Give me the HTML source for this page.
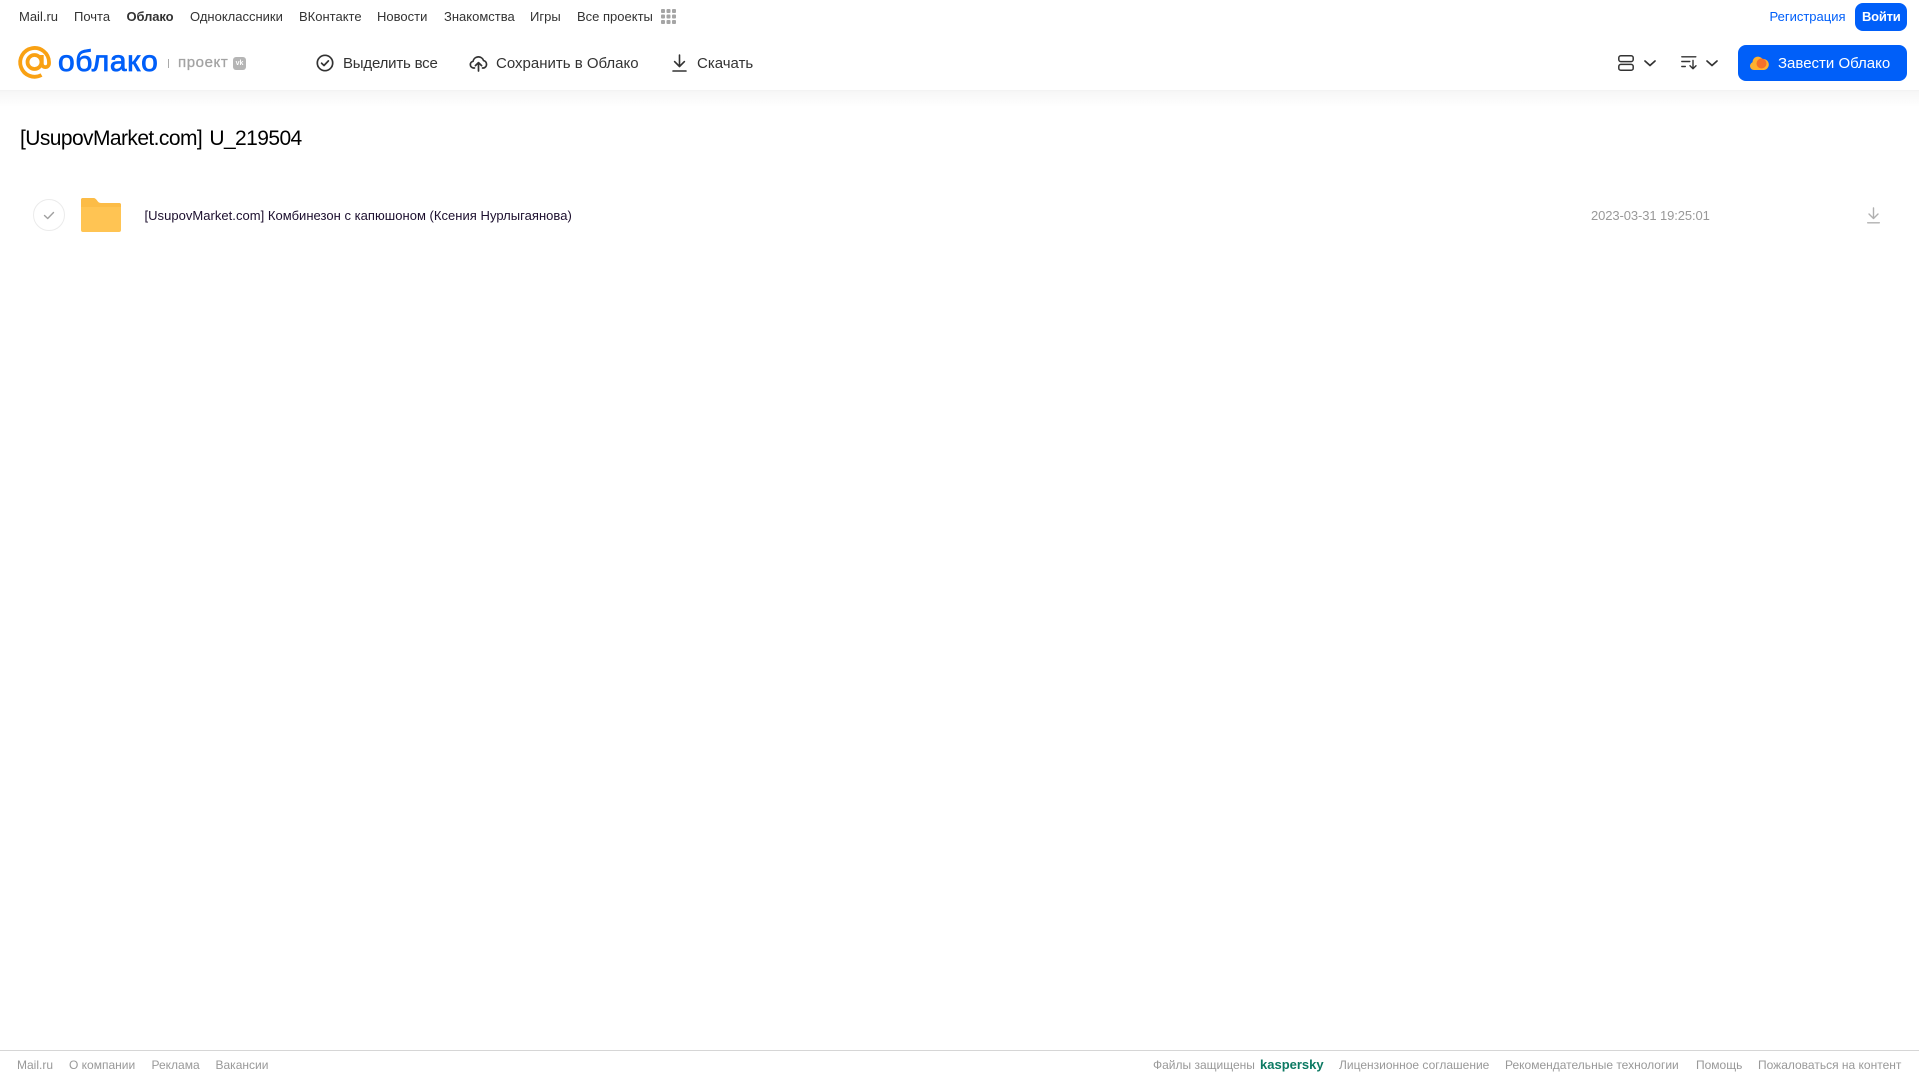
<!DOCTYPE html>
<html lang="ru">
<head>
<meta charset="utf-8">
<title>Облако</title>
<style>
html,body{margin:0;padding:0;background:#fff;width:1919px;height:1079px;overflow:hidden}
body{position:relative;font-family:"Liberation Sans",Arial,sans-serif}
.t{position:absolute;white-space:nowrap;line-height:1}
.n{top:10px;font-size:13px;color:#333;transform-origin:0 50%}
.b{top:56px;font-size:15px;color:#333}
.f{top:1059px;font-size:12px;color:#999}
svg{position:absolute;overflow:visible}
#shadow{position:absolute;left:0;top:91px;width:1919px;height:16px;background:linear-gradient(#f6f6f6,#fff);}
#hdrline{position:absolute;left:0;top:90px;width:1919px;height:1px;background:#f3f3f3}
#foot{position:absolute;left:0;top:1050px;width:1919px;height:1px;background:#d6d6d6}
.btn{position:absolute;background:#005ff9}
</style>
</head>
<body>
<div id="shadow"></div><div id="hdrline"></div>

<span class="t n" style="left:19px">Mail.ru</span>
<span class="t n" style="left:74px">Почта</span>
<span class="t n" style="left:126.500px;font-weight:bold;letter-spacing:-.1px">Облако</span>
<span class="t n" style="left:190px">Одноклассники</span>
<span class="t n" style="left:299px">ВКонтакте</span>
<span class="t n" style="left:377px">Новости</span>
<span class="t n" style="left:444px">Знакомства</span>
<span class="t n" style="left:530px">Игры</span>
<span class="t n" style="left:577px">Все проекты</span>
<svg style="left:661px;top:9px" width="15" height="15" fill="#a5a5a5">
<rect x="0" y="0" width="4" height="4" rx="1"/><rect x="5.500" y="0" width="4" height="4" rx="1"/><rect x="11" y="0" width="4" height="4" rx="1"/>
<rect x="0" y="5.500" width="4" height="4" rx="1"/><rect x="5.500" y="5.500" width="4" height="4" rx="1"/><rect x="11" y="5.500" width="4" height="4" rx="1"/>
<rect x="0" y="11" width="4" height="4" rx="1"/><rect x="5.500" y="11" width="4" height="4" rx="1"/><rect x="11" y="11" width="4" height="4" rx="1"/>
</svg>

<span class="t n" style="left:1769.500px;color:#005ff9">Регистрация</span>
<div class="btn" style="left:1855px;top:3px;width:52px;height:28px;border-radius:8px"></div>
<span class="t n" style="left:1862px;color:#fff;font-weight:bold;font-size:13px;letter-spacing:-.25px">Войти</span>

<!-- logo -->
<svg style="left:-1px;top:39px" width="60" height="45" fill="none" stroke="#f9a113" stroke-width="3.800">
<circle cx="35.500" cy="23" r="7"/>
<path d="M42.500 36A14.400 14.400 0 1 1 50 23v1.500a3.600 3.600 0 0 1-7.200 0V16"/>
</svg>
<span class="t" style="left:58px;top:47px;font-size:30px;color:#005ff9;letter-spacing:.6px;-webkit-text-stroke:.8px #005ff9">облако</span>
<div style="position:absolute;left:168px;top:59px;width:1px;height:9px;background:#aaa"></div>
<span class="t" style="left:178px;top:55px;font-size:15px;color:#a3a3a3;letter-spacing:.6px;-webkit-text-stroke:.3px #a3a3a3">проект</span>
<div style="position:absolute;left:233px;top:57px;width:13px;height:13px;border-radius:3px;background:#b5b5b5;color:#fff;font-size:7px;font-weight:bold;text-align:center;line-height:13px">vk</div>

<!-- toolbar -->
<svg style="left:316px;top:54px" width="18" height="18" fill="none" stroke="#333" stroke-width="1.700">
<circle cx="9" cy="9" r="7.700"/><path d="M5.600 9.200l2.400 2.300 4.400-4.600" stroke-linecap="round" stroke-linejoin="round"/>
</svg>
<span class="t b" style="left:343px;letter-spacing:-.2px">Выделить все</span>
<svg style="left:469px;top:54px" width="19" height="18" fill="none" stroke="#333" stroke-width="1.700" stroke-linecap="round" stroke-linejoin="round">
<path d="M5.500 14H4.400A3.400 3.400 0 0 1 4 7.300 5.500 5.500 0 0 1 14.600 6.600 3.800 3.800 0 0 1 14.600 14H13.500"/>
<path d="M9.500 17V9M6.400 11.600l3.100-3 3.100 3"/>
</svg>
<span class="t b" style="left:496px">Сохранить в Облако</span>
<svg style="left:672px;top:54px" width="15" height="18" fill="none" stroke="#333" stroke-width="1.600" stroke-linecap="round" stroke-linejoin="round">
<path d="M7.500 1v11M2.600 7.600l4.900 4.900 4.900-4.900M1 17h13"/>
</svg>
<span class="t b" style="left:697px">Скачать</span>

<svg style="left:1618px;top:55px" width="16" height="16" fill="none" stroke="#333" stroke-width="1.500">
<rect x=".8" y=".8" width="14.400" height="5.800" rx="2"/><rect x=".8" y="9.400" width="14.400" height="5.800" rx="2"/>
</svg>
<svg style="left:1644px;top:60px" width="12" height="7" fill="none" stroke="#333" stroke-width="1.700" stroke-linecap="round" stroke-linejoin="round"><path d="M1 1l5 4.500L11 1"/></svg>
<svg style="left:1681px;top:55px" width="17" height="16" fill="none" stroke="#333" stroke-width="1.400" stroke-linecap="round" stroke-linejoin="round">
<path d="M.8 1.800h14M.8 6.500h8M.8 11.500h3.500M12 5.500v8M9 10.800l3 3 3-3"/>
</svg>
<svg style="left:1706px;top:60px" width="12" height="7" fill="none" stroke="#333" stroke-width="1.700" stroke-linecap="round" stroke-linejoin="round"><path d="M1 1l5 4.500L11 1"/></svg>

<div class="btn" style="left:1738px;top:45px;width:169px;height:36px;border-radius:8px"></div>
<svg style="left:1749px;top:53px" width="20" height="18">
<path d="M5 17a4 4 0 0 1-1.500-7.700A5.500 5.500 0 0 1 13.500 6 5.500 5.500 0 0 1 15 17z" fill="#ffb02e"/>
<circle cx="12.500" cy="10.500" r="5" fill="#f5702a"/>
</svg>
<span class="t b" style="left:1778px;color:#fff">Завести Облако</span>

<!-- title -->
<span class="t" style="left:20px;top:128px;font-size:21px;letter-spacing:-.58px;word-spacing:2px;color:#000">[UsupovMarket.com] U_219504</span>

<!-- row -->
<svg style="left:33px;top:199px" width="32" height="32" fill="none">
<circle cx="16" cy="16" r="15.500" stroke="#ebebeb"/>
<path d="M11.500 16.500l3.200 3 5.800-6" stroke="#a0a0a0" stroke-width="1.400" stroke-linecap="round" stroke-linejoin="round"/>
</svg>
<svg style="left:81px;top:198px" width="40" height="34">
<path d="M2 0h10c2 0 3 1 4 2.500C17 4 18 5 20 5h18a2 2 0 0 1 2 2v25a2 2 0 0 1-2 2H2a2 2 0 0 1-2-2V2a2 2 0 0 1 2-2z" fill="#ffc453"/>
<path d="M2 0h10c2 0 3 1 4 2.500C17 4 18 5 20 5h18a2 2 0 0 1 2 2v2H0V2a2 2 0 0 1 2-2z" fill="#fcbc47"/>
</svg>
<span class="t" style="left:144.500px;top:209px;font-size:13px;letter-spacing:.03px;color:#1c0f2e">[UsupovMarket.com] Комбинезон с капюшоном (Ксения Нурлыгаянова)</span>
<span class="t" style="left:1591px;top:209px;font-size:13px;color:#999;letter-spacing:-.1px">2023-03-31 19:25:01</span>
<svg style="left:1867px;top:207px" width="13" height="17" fill="none" stroke="#b0b0b0" stroke-width="1.400" stroke-linecap="round" stroke-linejoin="round">
<path d="M6.500 1v10.500M2 7l4.500 4.500L11 7M.7 15.800h11.600"/>
</svg>

<!-- footer -->
<div id="foot"></div>
<span class="t f" style="left:17px">Mail.ru</span>
<span class="t f" style="left:69px">О компании</span>
<span class="t f" style="left:151.500px">Реклама</span>
<span class="t f" style="left:215.500px">Вакансии</span>
<span class="t f" style="left:1153px">Файлы защищены</span>
<span class="t f" style="left:1260px;color:#0d7a63;font-weight:bold;font-size:13px;top:1058px">kaspersky</span>
<span class="t f" style="left:1339px">Лицензионное соглашение</span>
<span class="t f" style="left:1505px">Рекомендательные технологии</span>
<span class="t f" style="left:1696px">Помощь</span>
<span class="t f" style="left:1758px">Пожаловаться на контент</span>
</body>
</html>
